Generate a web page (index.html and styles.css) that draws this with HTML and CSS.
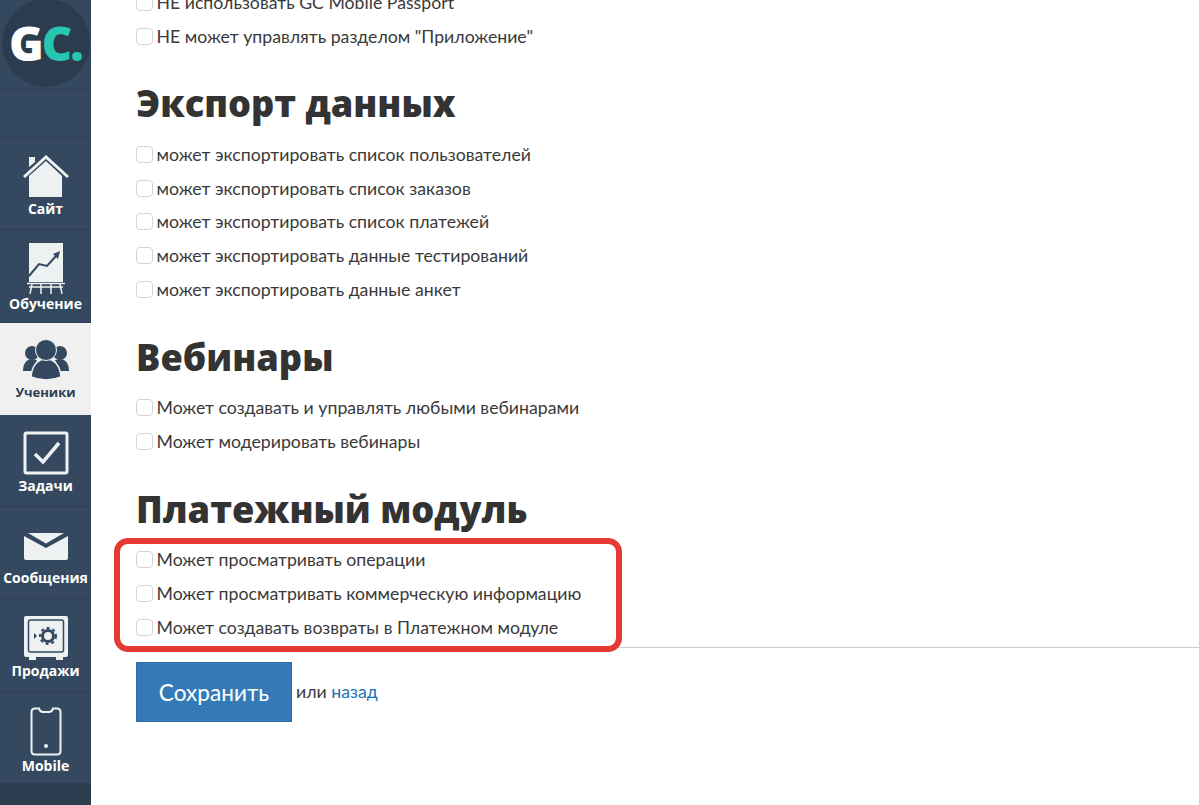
FILE: index.html
```html
<!DOCTYPE html>
<html lang="ru">
<head>
<meta charset="utf-8">
<title>Права</title>
<link rel="stylesheet" href="styles.css">
</head>
<body>
<div class="app">
  <nav class="side">
    <div class="logo-row"><div class="logo"><span class="g">G</span><span class="c">C.</span></div></div>
    <div class="blank"></div>
    <a class="item i1">
      <svg width="46" height="43" viewBox="0 0 46 43"><path class="f" d="M6 21 23 6 39 21V42H6Z"/><path class="f" d="M6 2h6v5l-6 5Z"/><path class="s" d="M1 22 23 2 45 22" fill="none"/></svg>
      <span>Сайт</span></a>
    <a class="item i2">
      <svg width="38" height="51" viewBox="0 0 38 51"><path class="f" d="M2 0H36V39H2Z"/><path d="M2 33 12 21 20 23 29 13" fill="none" stroke="#34495f" stroke-width="2"/><path d="M26 11 33 8 31 16Z" fill="#34495f"/><path class="s2" d="M0 40.500H38M5 41 3 51M14 41V51M24 41V51M33 41 35 51M2 44H36" fill="none"/></svg>
      <span>Обучение</span></a>
    <a class="item i3 active">
      <svg width="46" height="41" viewBox="0 0 46 41"><g fill="#34495f"><circle cx="9" cy="14" r="7"/><circle cx="37" cy="14" r="7"/><path d="M0 32C0 24 4 20 9 20L14 21 9 32Z"/><path d="M46 32C46 24 42 20 37 20L32 21 37 32Z"/><path d="M8 38C9 26 15 20 23 20 31 20 37 26 38 38 28 42 18 42 8 38Z" stroke="#f0f0f0" stroke-width="1.500"/><circle cx="23" cy="11" r="10.500" stroke="#f0f0f0" stroke-width="1"/></g></svg>
      <span>Ученики</span></a>
    <a class="item i4">
      <svg width="46" height="44" viewBox="0 0 46 44"><rect x="2" y="2" width="42" height="40" rx="1.500" fill="#34495f" stroke="#eef1f2" stroke-width="3"/><path d="M12 23 20 31 36 12" fill="none" stroke="#eef1f2" stroke-width="3.500"/></svg>
      <span>Задачи</span></a>
    <a class="item i5">
      <svg width="46" height="27" viewBox="0 0 46 27"><path class="f" d="M1 3 23 15 45 3V25Q45 27 43 27H3Q1 27 1 25Z"/><path class="f" d="M5 0H41L23 10.500Z"/></svg>
      <span>Сообщения</span></a>
    <a class="item i6">
      <svg width="46" height="44" viewBox="0 0 46 44"><rect x="1" y="0" width="44" height="41" rx="2" fill="#eef1f2"/><path class="f" d="M6 40h7v4H6ZM33 40h7v4h-7Z"/><rect x="5.500" y="4" width="35" height="32" rx="2" fill="none" stroke="#34495f" stroke-width="1.500"/><circle cx="25" cy="20" r="5.500" fill="none" stroke="#34495f" stroke-width="3"/><circle cx="25" cy="20" r="8" fill="none" stroke="#34495f" stroke-width="2" stroke-dasharray="3 3"/><path d="M11 17 14 20 11 23Z" fill="#34495f"/></svg>
      <span>Продажи</span></a>
    <a class="item i7">
      <svg width="32" height="49" viewBox="0 0 32 49"><path d="M5 1.500H9Q10 5 13 5H19Q22 5 23 1.500H27Q30.500 1.500 30.500 5V44Q30.500 47.500 27 47.500H5Q1.500 47.500 1.500 44V5Q1.500 1.500 5 1.500Z" fill="none" stroke="#eef1f2" stroke-width="2"/><circle cx="16" cy="39" r="2" fill="#eef1f2"/></svg>
      <span>Mobile</span></a>
    <div class="side-foot"></div>
  </nav>
  <main class="main">
    <div class="group first">
      <label class="row"><span class="box"></span>НЕ использовать GC Mobile Passport</label>
      <label class="row"><span class="box"></span>НЕ может управлять разделом "Приложение"</label>
    </div>
    <h2>Экспорт данных</h2>
    <div class="group">
      <label class="row"><span class="box"></span>может экспортировать список пользователей</label>
      <label class="row"><span class="box"></span>может экспортировать список заказов</label>
      <label class="row"><span class="box"></span>может экспортировать список платежей</label>
      <label class="row"><span class="box"></span>может экспортировать данные тестирований</label>
      <label class="row"><span class="box"></span>может экспортировать данные анкет</label>
    </div>
    <h2>Вебинары</h2>
    <div class="group">
      <label class="row"><span class="box"></span>Может создавать и управлять любыми вебинарами</label>
      <label class="row"><span class="box"></span>Может модерировать вебинары</label>
    </div>
    <h2>Платежный модуль</h2>
    <div class="group last">
      <label class="row"><span class="box"></span>Может просматривать операции</label>
      <label class="row"><span class="box"></span>Может просматривать коммерческую информацию</label>
      <label class="row"><span class="box"></span>Может создавать возвраты в Платежном модуле</label>
      <div class="highlight"></div>
    </div>
    <div class="actions">
      <button class="save" type="button">Сохранить</button>
      <span class="or">или <a class="back">назад</a></span>
    </div>
  </main>
</div>
</body>
</html>
```
FILE: styles.css
```css
html, body { margin: 0; height: 100%; overflow: hidden; background: #fff; }
body { font-family: "Lato", "Open Sans", sans-serif; color: #333; }
.app { display: flex; height: 805px; overflow: hidden; }
.side { width: 91px; flex: none; background: #34495f; display: flex; flex-direction: column; }
.logo-row { height: 89px; border-bottom: 1px solid #2c3e50; display: flex; justify-content: center; }
.logo { width: 88px; height: 88px; border-radius: 50%; background: #2b3c4f; margin-top: -1px; display: flex; align-items: center; justify-content: center; font: 800 47px/1 "Open Sans", sans-serif; letter-spacing: -2px; }
.g { color: #fff; }
.c { color: #26c6b0; }
.blank { height: 47px; border-bottom: 1px solid #2c3e50; }
.item { height: 92.300px; box-sizing: border-box; display: flex; flex-direction: column; align-items: center; justify-content: flex-end; color: #fff; font: 700 14px/18px "Open Sans", sans-serif; border-bottom: 1px solid #2c3e50; padding-bottom: 11px; }
.item svg { display: block; flex: none; }
.item span { margin-top: 1px; white-space: nowrap; }
.i1 span, .i4 span, .i6 span { margin-top: 2px; }
.i2 { padding-bottom: 9px; }
.i3 { padding-bottom: 14px; }
.i3 span { margin-top: 3px; font-size: 13px; }
.i5 span { margin-top: 9px; }
.i7 { padding-bottom: 8px; }
.f { fill: #eef1f2; }
.s { stroke: #eef1f2; stroke-width: 3; }
.s2 { stroke: #eef1f2; stroke-width: 1.500; }
.active { background: #f0f0f0; color: #2c3e50; border-bottom: 0; }
.side-foot { flex: 1; background: #2c3e50; }
.main { flex: 1; padding-left: 45px; position: relative; }
.group { display: flex; flex-direction: column; position: relative; }
.first { margin-top: -14.500px; }
.row { display: flex; align-items: center; height: 33.800px; font-size: 17.700px; color: #3a3a3a; white-space: nowrap; }
.box { width: 15px; height: 15px; border: 1px solid #d4d4d4; border-radius: 4px; background: #fff; margin-right: 3.500px; flex: none; }
h2 { margin: 28.400px 0 12px; font: 800 36.200px/44px "Open Sans", sans-serif; color: #333; }
.last { border-bottom: 1px solid #ccc; padding-bottom: 3px; }
.highlight { position: absolute; left: -22px; top: -5px; width: 508px; height: 114px; box-sizing: border-box; border: 6.500px solid #e53a32; border-radius: 14px; }
.actions { display: flex; align-items: center; margin-top: 14px; gap: 4px; }
.save { width: 156px; height: 60px; background: #337ab7; border: 1px solid #2e6da4; color: #fff; font: 400 22.600px "Lato", sans-serif; padding: 0; }
.or { font-size: 17.700px; color: #3a3a3a; position: relative; top: -1px; }
.back { color: #1a73b5; }
```
